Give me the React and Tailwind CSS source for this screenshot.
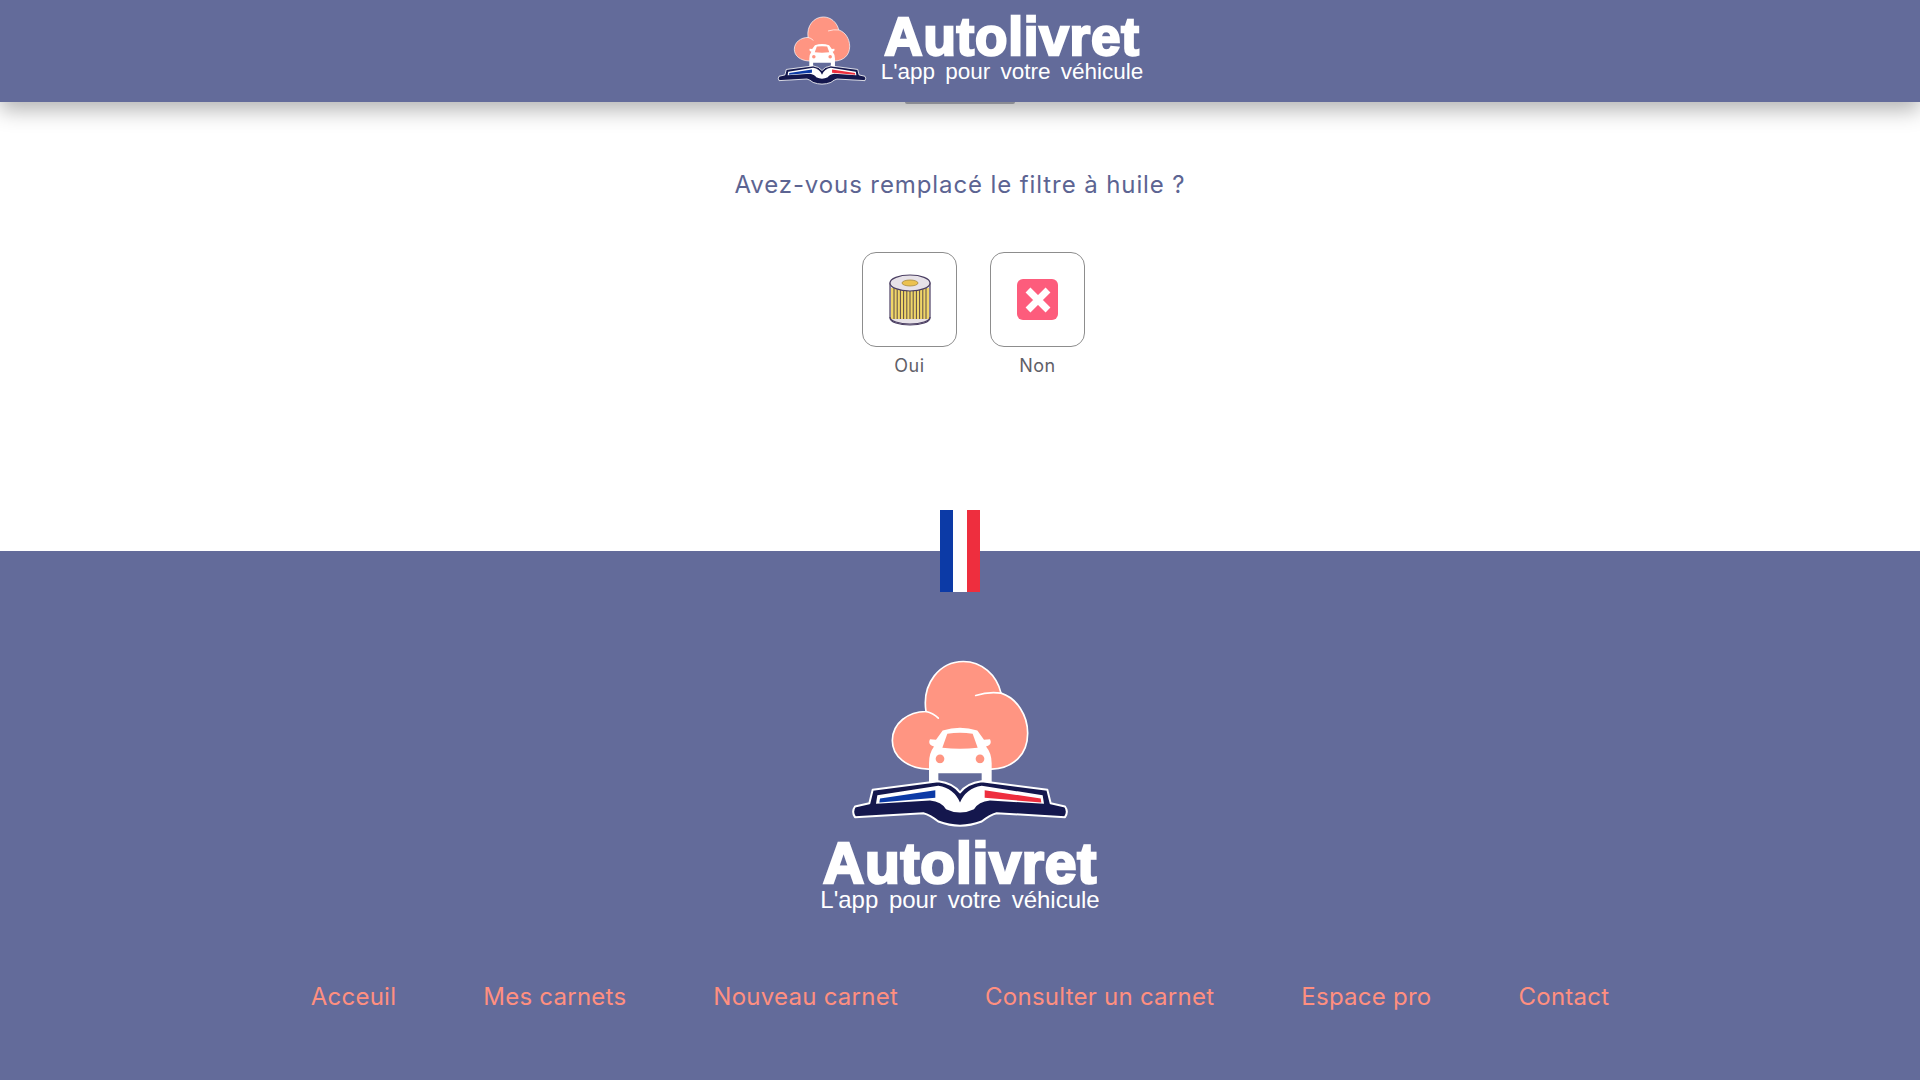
const links = ['Acceuil', 'Mes carnets', 'Nouveau carnet', 'Consulter un carnet', 'Espace pro', 'Contact'];

function LogoMark({ className }) {
  return (
    <svg viewBox="150 58 660 506" className={className}>
      {/* nuage */}
      <path
        d="M385 388C320 385 277 350 277 302C277 250 325 215 378 215C365 130 420 65 490 65C545 65 590 105 603 160C650 175 683 225 683 280C683 345 640 385 575 388Z"
        fill="#ff9582"
        stroke="#fff"
        strokeWidth="5"
      />
      <path d="M378 215Q400 220 415 235M527 167Q565 155 603 160" fill="none" stroke="#fff" strokeWidth="5" strokeLinecap="round" />
      {/* voiture */}
      <path
        d="M428 272Q480 256 532 272L552 300L570 298Q578 314 558 320Q575 340 575 370L575 430L545 430L545 400L415 400L415 430L387 430L387 370Q387 340 402 320Q382 314 390 298L408 300Z"
        fill="#fff"
      />
      <path d="M442 282Q480 276 518 282L533 324Q480 330 427 324Z" fill="#ff9582" />
      <circle cx="420" cy="357" r="13" fill="#ff9582" />
      <circle cx="540" cy="357" r="13" fill="#ff9582" />
      {/* livre */}
      <path
        d="M218 450L415 424Q460 430 480 458Q500 430 545 424L742 450L752 490L795 500Q806 515 795 532L590 520Q570 525 545 545Q480 570 415 545Q390 525 370 520L165 532Q154 515 165 500L208 490Z"
        fill="#14174d"
        stroke="#fff"
        strokeWidth="6"
        strokeLinejoin="round"
      />
      <path
        d="M232 466L415 438Q462 446 480 488Q498 446 545 438L728 466L732 492L570 482Q535 486 522 508Q480 528 438 508Q425 486 390 482L228 492Z"
        fill="#fff"
      />
      <path d="M240 476L406 451L406 474L238 488Z" fill="#0c3aa6" />
      <path d="M554 451L722 476L724 488L554 474Z" fill="#ee2e3e" />
    </svg>
  );
}

function Wordmark({ big }) {
  return (
    <div className="flex flex-col items-center font-['Liberation_Sans',Arial,sans-serif] text-white">
      <span
        className={
          big
            ? 'text-[57px] leading-[48px] font-bold tracking-[0.8px] [-webkit-text-stroke:2.6px_white]'
            : 'text-[53px] leading-[46px] font-bold tracking-[0.8px] [-webkit-text-stroke:2.4px_white]'
        }
      >
        Autolivret
      </span>
      <span
        className={
          big
            ? 'text-[24px] leading-[25px] [word-spacing:4px] whitespace-nowrap'
            : 'text-[22.5px] leading-[23px] [word-spacing:4px] whitespace-nowrap'
        }
      >
        L'app pour votre véhicule
      </span>
    </div>
  );
}

function FilterIcon() {
  const ribs = [];
  for (let i = 0; i < 11; i++) ribs.push(5 + i * 3.2);
  return (
    <svg viewBox="0 0 42 52" className="w-[42px] h-[52px]">
      <path d="M1 9V44C1 48 10 51 21 51C32 51 41 48 41 44V9Z" fill="#e7e2e8" stroke="#4b3f63" strokeWidth="1.2" />
      <rect x="2" y="14" width="38" height="31" fill="#f0d668" />
      {ribs.map(x => (
        <line key={x} x1={x} y1="14" x2={x} y2="45" stroke="#5b4a4a" strokeWidth="1" />
      ))}
      <path d="M1 43C1 47 10 50 21 50C32 50 41 47 41 43" fill="none" stroke="#4b3f63" strokeWidth="1.2" />
      <ellipse cx="21" cy="9" rx="20" ry="8" fill="#e7e2e8" stroke="#4b3f63" strokeWidth="1.2" />
      <ellipse cx="21" cy="9" rx="8" ry="3" fill="#ecc24f" stroke="#a88a3a" strokeWidth="0.8" />
    </svg>
  );
}

function NoIcon() {
  return (
    <div className="w-[41px] h-[41px] rounded-md bg-[#fd5c7c] flex items-center justify-center">
      <svg viewBox="0 0 24 24" className="w-[30px] h-[30px]">
        <path d="M4 4L20 20M20 4L4 20" stroke="#fff" strokeWidth="5.5" />
      </svg>
    </div>
  );
}

function Choice({ label, children }) {
  return (
    <div className="flex flex-col items-center">
      <button className="w-[95px] h-[95px] rounded-[14px] border border-[#8d8d8d] bg-white flex items-center justify-center">
        {children}
      </button>
      <span className="mt-[5px] text-[18px] leading-[28px] tracking-[0.5px] text-[#5f6068]">{label}</span>
    </div>
  );
}

export default function App() {
  return (
    <div className="w-full h-[1080px] flex flex-col overflow-hidden bg-white font-['Inter',sans-serif]">
      <header className="relative z-10 h-[102px] flex-shrink-0 bg-[#636b9a] flex items-center justify-center gap-[14px] shadow-[0_8px_20px_rgba(0,0,0,0.3)]">
        <LogoMark className="w-[90px] h-[69px] mt-[-2px]" />
        <div className="mt-[-6px]"><Wordmark /></div>
        <div className="absolute left-[905px] top-full w-[110px] h-[2px] rounded-b bg-[#8a8b92]" />
      </header>

      <main className="h-[449px] flex-shrink-0 flex flex-col items-center pt-[66px]">
        <h1 className="text-[24px] leading-[34px] text-[#5c6492] tracking-[0.9px]">Avez-vous remplacé le filtre à huile ?</h1>
        <div className="flex gap-[33px] mt-[50px] ml-[27px]">
          <Choice label="Oui"><FilterIcon /></Choice>
          <Choice label="Non"><NoIcon /></Choice>
        </div>
      </main>

      <footer className="relative flex-1 bg-[#636b9a] flex flex-col items-center">
        <div className="absolute left-[940px] top-[-41px] w-[40px] h-[82px] flex">
          <div className="flex-1 bg-[#0c3aa6]" />
          <div className="flex-1 bg-white" />
          <div className="flex-1 bg-[#ee2e3e]" />
        </div>
        <LogoMark className="w-[220px] h-[169px] mt-[108px]" />
        <div className="mt-[11px]"><Wordmark big /></div>
        <nav className="flex gap-[87px] mt-[69px]">
          {links.map(l => (
            <a key={l} className="text-[24px] leading-[32px] tracking-[0.25px] text-[#ff8f80]">{l}</a>
          ))}
        </nav>
      </footer>
    </div>
  );
}
